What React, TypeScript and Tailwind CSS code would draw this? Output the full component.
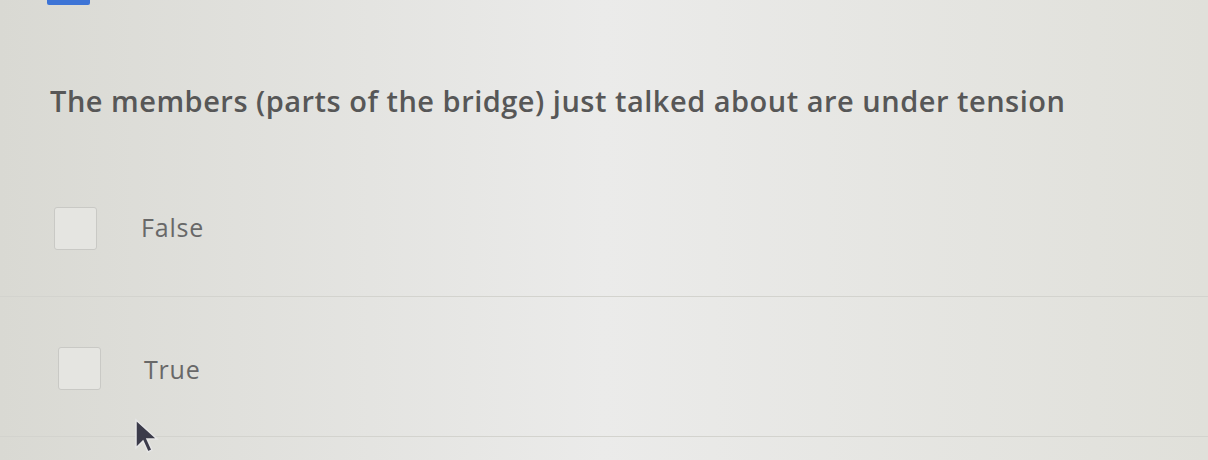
import { useState } from "react";

type Option = { id: string; label: string };

const options: Option[] = [
  { id: "false", label: "False" },
  { id: "true", label: "True" },
];

function Checkbox({ checked }: { checked: boolean }) {
  return (
    <span
      className={`block w-[43px] h-[43px] rounded-[3px] border ${
        checked ? "border-[#3a6fd1] bg-[#3a6fd1]" : "border-[#c9c9c5] bg-[#e5e5e1]"
      }`}
    />
  );
}

export default function App() {
  const [selected, setSelected] = useState<string | null>(null);

  return (
    <div
      className="relative w-[1208px] h-[460px] overflow-hidden bg-linear-to-r from-[#d9d9d3] via-[#ebebea] to-[#e0e0da]"
      style={{ fontFamily: '"Open Sans", "Liberation Sans", sans-serif' }}
    >
      {/* Tab marker */}
      <div className="ml-[47px] w-[43px] h-[5px] bg-[#3d74d6] rounded-b-[2px]" />

      {/* Question */}
      <h2 className="ml-[50px] mt-[78px] text-[29px] font-semibold tracking-[0.5px] text-[#575757] leading-[36px]">
        The members (parts of the bridge) just talked about are under tension
      </h2>

      {/* Answers */}
      <div className="mt-[38px]">
        {options.map((opt, i) => (
          <label
            key={opt.id}
            onClick={() => setSelected(opt.id)}
            className="flex items-center h-[140px] border-b border-[#d3d3ce] cursor-pointer"
          >
            <span className={i === 0 ? "ml-[54px] mt-[3px]" : "ml-[58px] mt-[4px]"}>
              <Checkbox checked={selected === opt.id} />
            </span>
            <span
              className={`text-[25px] tracking-[0.8px] text-[#686868] ${
                i === 0 ? "ml-[44px] mt-[3px]" : "ml-[43px] mt-[6px]"
              }`}
            >
              {opt.label}
            </span>
          </label>
        ))}
      </div>

      {/* Mouse pointer */}
      <svg
        className="absolute left-[134px] top-[418px]"
        width="28"
        height="36"
        viewBox="0 0 28 36"
      >
        <path d="M2 2 L2 30 L9 23 L14 34 L18 32 L13 21 L23 21 Z" fill="#3b3b4a" stroke="#e6e6e6" strokeWidth="1.5" />
      </svg>
    </div>
  );
}
